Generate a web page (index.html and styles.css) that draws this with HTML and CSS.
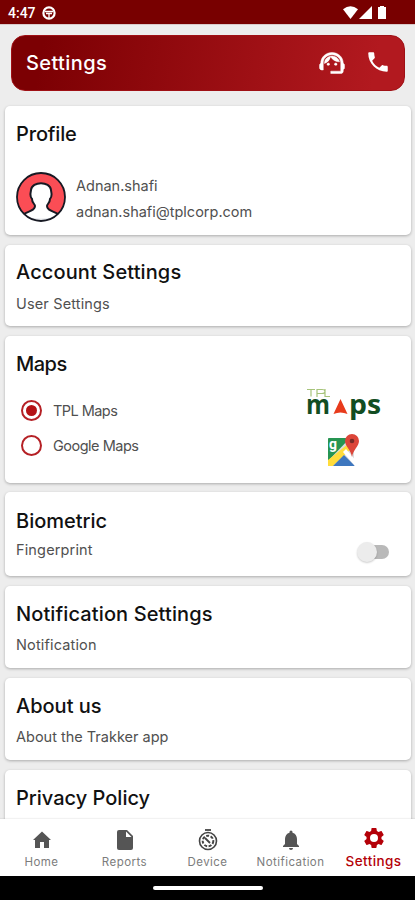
FILE: index.html
```html
<!DOCTYPE html>
<html lang="en">
<head>
<meta charset="utf-8">
<title>Settings</title>
<link rel="stylesheet" href="styles.css">
</head>
<body>
<div class="screen">
  <div class="status">
    <span class="time">4:47</span>
    <svg class="wheel" width="14" height="14" viewBox="0 0 14 14"><circle cx="7" cy="7" r="5.600" fill="none" stroke="#fff" stroke-width="2.200"/><path d="M3 5.500h8M4 7.500h6M7 7v5" stroke="#fff" stroke-width="1.300"/></svg>
    <svg class="signals" width="45" height="14" viewBox="0 0 45 14" fill="#fff"><path d="M0 3.200Q7.500-2.500 15 3.200L7.500 13z"/><path d="M29 0v13H16z"/><path d="M37 1V0h4v1h2v12h-8V1z"/></svg>
  </div>
  <header class="header">
    <h1>Settings</h1>
    <svg class="agent" width="30" height="28" viewBox="0 0 24 24" preserveAspectRatio="none" fill="#fff" stroke="#fff" stroke-width=".4"><path d="M21 12.220C21 6.730 16.740 3 12 3c-4.690 0-9 3.650-9 9.280-.6.340-1 .98-1 1.720v2c0 1.100.9 2 2 2h1v-6.100c0-3.870 3.130-7 7-7s7 3.130 7 7V19h-8v2h8c1.100 0 2-.9 2-2v-1.220c.59-.31 1-.92 1-1.640v-2.300c0-.7-.41-1.310-1-1.620z"/><circle cx="9" cy="13" r="1"/><circle cx="15" cy="13" r="1"/><path d="M18 11.030A6.040 6.040 0 0 0 12.050 6c-3.030 0-6.290 2.510-6.030 6.450a8.075 8.075 0 0 0 4.860-5.890c1.310 2.630 4 4.440 7.120 4.470z"/></svg>
    <svg class="phone" width="26" height="26" viewBox="0 0 24 24" fill="#fff"><path d="M20 15.500c-1.250 0-2.450-.2-3.570-.57-.35-.11-.74-.03-1.020.24l-2.200 2.200c-2.830-1.440-5.150-3.750-6.590-6.580l2.200-2.210c.28-.27.36-.66.25-1.010A11.400 11.400 0 0 1 8.500 4c0-.55-.45-1-1-1H4c-.55 0-1 .45-1 1 0 9.390 7.610 17 17 17 .55 0 1-.45 1-1v-3.500c0-.55-.45-1-1-1z"/></svg>
  </header>
  <main class="list">
    <section class="card profile">
      <h2 class="t-profile">Profile</h2>
      <div class="user">
        <svg width="50" height="50" viewBox="0 0 50 50"><defs><clipPath id="face"><circle cx="25" cy="25" r="24"/></clipPath></defs><circle cx="25" cy="25" r="24" fill="#fb4d55"/><path clip-path="url(#face)" d="M4 48C6 38 19 41 19 34C19 32 16 31 16 27C13 24 15 20 15 18C16 9 34 9 35 18C35 20 37 24 34 27C34 31 31 32 31 34C31 41 44 38 46 48V52H4z" fill="#fff" stroke="#171923" stroke-width="2"/><path clip-path="url(#face)" d="M6 43q19 7 38 0v9H6z" fill="#e8eaee"/><circle cx="25" cy="25" r="24" fill="none" stroke="#171923" stroke-width="1.800"/></svg>
        <div class="lines"><p>Adnan.shafi</p><p>adnan.shafi@tplcorp.com</p></div>
      </div>
    </section>
    <section class="card account"><h2 class="t-account">Account Settings</h2><p class="s-user">User Settings</p></section>
    <section class="card maps">
      <h2 class="t-maps">Maps</h2>
      <div class="choice"><i class="radio on"></i><p class="s-tpl">TPL Maps</p>
        <svg class="tpl" width="80" height="52" viewBox="-2 -6 80 52"><path d="M1 2.500h8M5 2.500v7M11 10V2.500h5q3 0 3 2t-3 2h-5M19 2v7.500h5" fill="none" stroke="#a7c47b" stroke-width="1.200"/><text x="0" y="27" class="logo" textLength="24" lengthAdjust="spacingAndGlyphs">m</text><path d="M34.500 12l7 15q-7-3-14 0z" fill="#e83b1c"/><text x="43" y="27" class="logo" textLength="32" lengthAdjust="spacingAndGlyphs">ps</text></svg>
      </div>
      <div class="choice"><i class="radio"></i><p class="s-google">Google Maps</p>
        <svg class="gmap" width="32" height="34" viewBox="0 0 32 34"><path d="M1 5h26v28H1z" fill="#ddd"/><path d="M1 6q0-1 1-1h21L1 28z" fill="#269552"/><path d="M1 27L21 11l4 4L6 33H1z" fill="#ffdc3b"/><path d="M6 33l11-11 11 11z" fill="#3e77bf"/><path d="M16 19l3-3 11 13v4h-2z" fill="#fff"/><text x="2" y="16" class="g">g</text><path d="M25 1a7 7 0 0 1 7 7c0 5-6 9-7 16-1-7-7-11-7-16a7 7 0 0 1 7-7z" fill="#dc4539"/><circle cx="25" cy="8" r="2.300" fill="#792a26"/></svg>
      </div>
    </section>
    <section class="card bio"><h2 class="t-bio">Biometric</h2><div class="toggle-row"><p class="s-finger">Fingerprint</p><span class="switch"><i></i></span></div></section>
    <section class="card notif"><h2 class="t-notif">Notification Settings</h2><p class="s-notif">Notification</p></section>
    <section class="card about"><h2>About us</h2><p>About the Trakker app</p></section>
    <section class="card privacy"><h2>Privacy Policy</h2></section>
  </main>
  <nav class="nav">
    <a><svg width="24" height="24" viewBox="0 0 24 24" fill="#555"><path d="M10 20v-6h4v6h5v-8h2L12 3.500 3 12h2v8z"/></svg><span>Home</span></a>
    <a><svg width="24" height="24" viewBox="0 0 24 24"><path d="M6 2h8l6 6v12q0 2-2 2H6q-2 0-2-2V4q0-2 2-2z" fill="#555"/><path d="M13 3.500V9h5.500z" fill="#fff"/></svg><span>Reports</span></a>
    <a><svg width="24" height="24" viewBox="0 0 24 24" fill="none" stroke="#444"><path d="M9 2h6" stroke-width="1.800"/><circle cx="12" cy="13" r="8.500" stroke-width="1.600"/><circle cx="12" cy="13" r="5.300" stroke-width="2" stroke-dasharray="3 1.500"/><path d="M9 10l3 3 2 2" stroke-width="1.800"/></svg><span>Device</span></a>
    <a><svg width="24" height="24" viewBox="0 0 24 24" fill="#555"><path d="M12 22c1.100 0 2-.9 2-2h-4a2 2 0 0 0 2 2zm6-6v-5c0-3.070-1.640-5.640-4.500-6.320V4a1.500 1.500 0 0 0-3 0v.68C7.630 5.360 6 7.920 6 11v5l-2 2v1h16v-1z"/></svg><span>Notification</span></a>
    <a class="active"><svg width="24" height="24" viewBox="0 0 24 24" fill="#b40008"><path d="M19.430 12.980c.04-.32.07-.64.07-.98s-.03-.66-.07-.98l2.110-1.650c.19-.15.24-.42.12-.64l-2-3.460c-.12-.22-.39-.3-.61-.22l-2.490 1c-.52-.4-1.080-.73-1.690-.98l-.38-2.650A.49.49 0 0 0 14 2h-4c-.25 0-.46.18-.49.42l-.38 2.650c-.61.25-1.170.59-1.690.98l-2.490-1c-.23-.09-.49 0-.61.22l-2 3.460c-.13.22-.07.49.12.64l2.110 1.650c-.04.32-.07.65-.07.98s.03.66.07.98l-2.110 1.650c-.19.15-.24.42-.12.64l2 3.460c.12.22.39.3.61.22l2.490-1c.52.4 1.080.73 1.690.98l.38 2.650c.03.24.24.42.49.42h4c.25 0 .46-.18.49-.42l.38-2.650c.61-.25 1.170-.59 1.690-.98l2.490 1c.23.09.49 0 .61-.22l2-3.460c.12-.22.07-.49-.12-.64zM12 16a4 4 0 1 1 0-8 4 4 0 0 1 0 8z"/></svg><span>Settings</span></a>
  </nav>
  <div class="gesture"><i></i></div>
</div>
</body>
</html>
```
FILE: styles.css
```css
* { box-sizing: border-box; }
body, h1, h2, p { margin: 0; }
body { font-family: Inter, "Liberation Sans", sans-serif; }
svg { display: block; flex: none; }
.screen { width: 415px; height: 900px; display: flex; flex-direction: column; background: #ededed; overflow: hidden; }
.status { height: 25px; flex: none; display: flex; align-items: center; padding: 1px 27px 0 8px; background: #780000; border-bottom: 1px solid #d9caca; color: #fff; }
.time { font: 500 14px/16px Roboto, sans-serif; width: 34px; }
.signals { margin-left: auto; }
.header { height: 56px; flex: none; margin: 10px 10px 0 11px; padding: 0 13px 0 14px; border-radius: 14px; display: flex; align-items: center; background: linear-gradient(100deg, #7c0003 8%, #b2191f 92%); border: 1px solid #9f1015; color: #fff; }
h1 { font-size: 20px; font-weight: 500; line-height: 24px; margin-right: auto; letter-spacing: .4px; }
.agent { margin-right: 18px; }
.phone { margin-top: -3px; }
.list { flex: 1; min-height: 0; overflow: hidden; padding: 15px 4px 0 5px; }
.card { background: #fff; border-radius: 5px; padding: 16px 10px 0 11px; box-shadow: 0 1px 3px rgba(0,0,0,.28); margin-bottom: 10px; color: #505050; }
h2 { font-size: 20px; font-weight: 500; line-height: 24px; color: #111; white-space: nowrap; }
p { font-size: 14.5px; line-height: 20px; white-space: nowrap; }
h1, h2, p, .nav span { width: max-content; }
.t-profile { letter-spacing: -.15px; }
.t-account, .t-notif { letter-spacing: .12px; }
.t-maps { letter-spacing: -.5px; }
.s-user, .s-finger, .s-notif { letter-spacing: .15px; }
.s-tpl { letter-spacing: -.55px; }
.s-google { letter-spacing: -.5px; }
.profile { height: 129px; }
.user { display: flex; gap: 10px; margin-top: 26px; }
.lines { display: flex; flex-direction: column; gap: 6px; padding-top: 4px; }
.account { height: 81px; padding-top: 15px; }
.account p { margin-top: 10px; }
.notif p, .about p { margin-top: 9px; }
.maps { height: 147px; margin-bottom: 9px; }
.choice { display: flex; align-items: center; height: 35px; padding-left: 5px; }
.maps h2 { margin-bottom: 17px; }
.radio { width: 21px; height: 21px; border: 2px solid #b52025; border-radius: 50%; margin-right: 11px; padding: 3px; }
.on::before { content: ""; display: block; width: 11px; height: 11px; border-radius: 50%; background: #b41216; }
.tpl { margin: -7px 17px 0 auto; }
.gmap { margin: 8px 42px 0 auto; }
.logo { font: 700 27px/1 "Open Sans", sans-serif; fill: #124d22; }
.g { font: 700 14px Roboto, sans-serif; fill: #fff; }
.bio { height: 84px; padding-top: 17px; }
.toggle-row { display: flex; justify-content: space-between; align-items: center; margin-top: 7px; }
.switch { width: 28px; height: 14px; border-radius: 7px; background: #b9b9b9; margin: 4px 12px 0 0; display: flex; align-items: center; }
.switch i { width: 20px; height: 20px; flex: none; border-radius: 50%; background: #ececec; margin-left: -4px; box-shadow: 0 1px 2px rgba(0,0,0,.2); }
.notif, .about { height: 82px; }
.privacy { height: 82px; }
.nav { height: 57px; flex: none; background: #fff; display: grid; grid-template-columns: repeat(5, 83px); box-shadow: 0 -1px 1px rgba(0,0,0,.05); position: relative; }
.nav a { display: flex; flex-direction: column; align-items: center; padding-top: 9px; color: #7c7c7c; font-size: 11.5px; line-height: 16px; letter-spacing: .45px; }
.nav span { margin-top: 2px; }
.nav a.active { padding-top: 7px; color: #b40008; font-size: 13.5px; font-weight: 500; letter-spacing: .4px; }
.nav a.active span { margin-top: 3px; }
.gesture { height: 24px; flex: none; background: #000; display: flex; justify-content: center; padding-top: 10px; }
.gesture i { width: 110px; height: 4px; border-radius: 2px; background: #fff; }
```
